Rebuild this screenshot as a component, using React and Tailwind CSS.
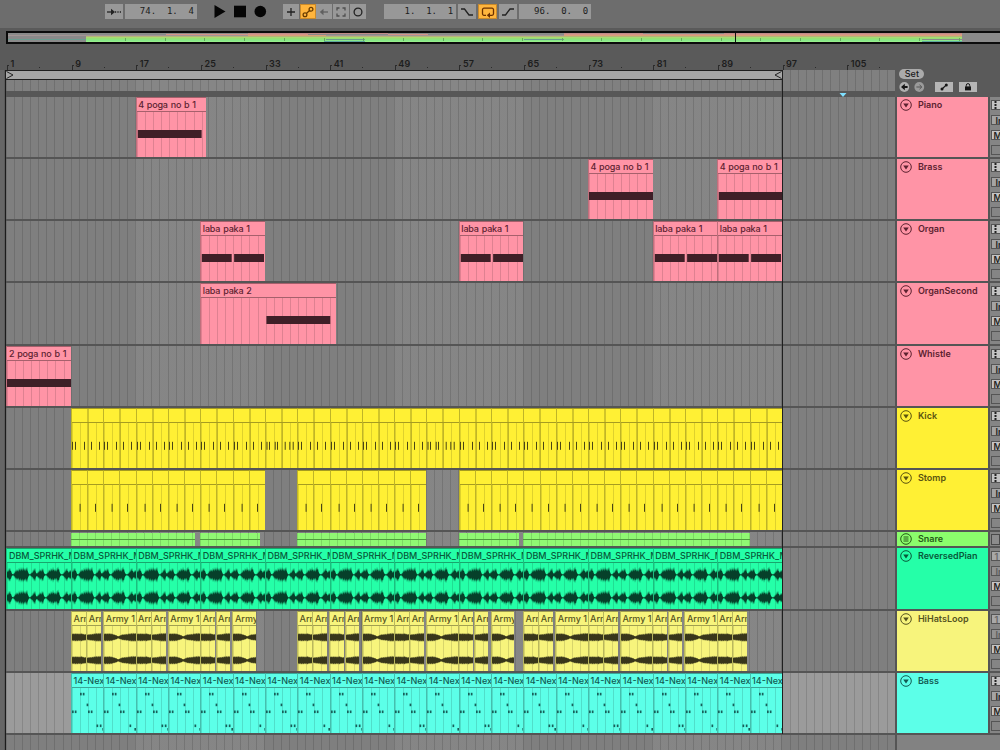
import React from "react";

const BAR = 775.5 / 96; // pixels per bar in the arrangement

const GRID =
  "bg-[repeating-linear-gradient(90deg,rgba(0,0,0,0.13)_0_1px,transparent_1px_8.078px)]";
const LANE_GRID =
  "bg-[repeating-linear-gradient(90deg,rgba(0,0,0,0.13)_0_1px,transparent_1px_8.078px),repeating-linear-gradient(90deg,transparent_0_129.25px,rgba(255,255,255,0.05)_129.25px_258.5px)]";

const split = (start, end, step, extra = {}) => {
  const out = [];
  for (let b = start; b < end; b += step) {
    out.push({ start: b, end: Math.min(b + step, end), ...extra });
  }
  return out;
};

// HiHat loops: short / short / long groups
const army = (start, shape) =>
  shape.map(([from, to]) => ({
    start: start + from,
    end: start + to,
    name: "Army 1",
    long: to - from > 2,
  }));
const SHORT = [[0, 1.85], [1.9, 3.72]];
const FULL = [...SHORT, [4, 8]];
const CUT = [...SHORT, [4, 6.92]];

const HIHATS = [
  ...army(9, FULL),
  ...army(17, FULL),
  ...army(25, CUT),
  ...army(37, SHORT),
  ...army(41, FULL),
  ...army(49, FULL),
  ...army(57, CUT),
  ...army(65, FULL),
  ...army(73, FULL),
  ...army(81, FULL),
  ...army(89, SHORT),
];

const PINK = "bg-[#ff94a6]";
const YELLOW = "bg-[#fff034]";

const TRACKS = [
  {
    name: "Piano",
    color: PINK,
    text: "text-[#5c2230]",
    height: "h-[62px]",
    clips: [{ start: 17, end: 25.65, name: "4 poga no b 1", notes: [[0.1, 8]] }],
  },
  {
    name: "Brass",
    color: PINK,
    text: "text-[#5c2230]",
    height: "h-[62px]",
    clips: [
      { start: 73, end: 81, name: "4 poga no b 1", notes: [[0, 8]] },
      { start: 89, end: 97, name: "4 poga no b 1", notes: [[0.1, 8]] },
    ],
  },
  {
    name: "Organ",
    color: PINK,
    text: "text-[#5c2230]",
    height: "h-[62px]",
    clips: [25, 57, 81, 89].map((b) => ({
      start: b,
      end: b + 8,
      name: "laba paka 1",
      notes: [[0.1, 3.8], [4.1, 7.8]],
    })),
  },
  {
    name: "OrganSecond",
    color: PINK,
    text: "text-[#5c2230]",
    height: "h-[63px]",
    clips: [{ start: 25, end: 41.75, name: "laba paka 2", notes: [[8.1, 16]] }],
  },
  {
    name: "Whistle",
    color: PINK,
    text: "text-[#5c2230]",
    height: "h-[62px]",
    clips: [{ start: 1, end: 9, name: "2 poga no b 1", notes: [[0, 8]] }],
  },
  {
    name: "Kick",
    color: YELLOW,
    text: "text-[#5a5310]",
    height: "h-[62px]",
    kind: "kick",
    clips: split(9, 97, 4),
  },
  {
    name: "Stomp",
    color: YELLOW,
    text: "text-[#5a5310]",
    height: "h-[62px]",
    kind: "stomp",
    clips: [...split(9, 33, 2), ...split(37, 53, 2), ...split(57, 97, 2)],
  },
  {
    name: "Snare",
    color: "bg-[#8bfd6c]",
    text: "text-[#265b18]",
    height: "h-[16px]",
    folded: true,
    clips: [
      { start: 9, end: 24.4 },
      { start: 25, end: 32.4 },
      { start: 37, end: 53 },
      { start: 57, end: 64.5 },
      { start: 65, end: 93 },
    ],
  },
  {
    name: "ReversedPian",
    color: "bg-[#25ffa8]",
    text: "text-[#08593a]",
    height: "h-[63px]",
    kind: "piano",
    audio: true,
    clips: split(1, 97, 8, { name: "DBM_SPRHK_Melody" }),
  },
  {
    name: "HiHatsLoop",
    color: "bg-[#f7f47c]",
    text: "text-[#55531f]",
    height: "h-[62px]",
    kind: "hihat",
    audio: true,
    clips: HIHATS,
  },
  {
    name: "Bass",
    color: "bg-[#5cffe8]",
    text: "text-[#125a52]",
    height: "h-[62px]",
    kind: "bass",
    selected: true,
    clips: split(9, 97, 4, { name: "14-Next" }),
  },
];

// Half heights, one per pixel, of an 8 bar piano clip
const PIANO_WAVE = [
  4, 5, 7, 7, 4, 1, 0.7, 2, 4, 5, 6, 5, 7.5, 6, 8, 6.5, 8, 7, 6, 7.5, 8, 3, 0.8, 0.7,
  2, 3, 5, 6.5, 7, 2, 2, 3.5, 4.5, 6, 5, 7, 6.5, 2, 0.8, 0.7, 2, 3.5, 5.5, 5, 7, 6,
  8, 5.5, 6, 5, 7.5, 8.5, 6, 2, 0.8, 0.7, 1.5, 3, 4.5, 6.5, 7, 3.5, 4, 5, 5,
];
const HAT_A = [3.8, 4.3, 3.8, 4.4, 4, 4.4, 3.8, 4.2, 3.8, 4.5, 4, 3.8, 3.4, 3.6, 3.2];
const HAT_B = [2.8, 3.2, 3.2, 3.6, 3.4, 3.8, 3.6, 4.3, 4, 4.6, 4.2, 4.6, 4.3, 4.7, 4.2];
const HAT_LONG = [
  3.8, 4.4, 4, 4.4, 4, 4.5, 4, 4.2, 3.8, 3.2, 3.2, 2.6, 2.6, 1.6, 1.3, 1.6, 2.2, 2.5,
  3.2, 3, 3.5, 3.2, 3.7, 3.5, 3.8, 4.2, 4, 4.6, 4.2, 4.7, 4.3, 4.6, 4.2,
];

// depth: how far the outline falls back between two peaks
function Wave({ samples, y, fill, depth = 0.7 }) {
  const line = (side) =>
    samples.flatMap((a, i) => [
      `${i},${(y + side * a).toFixed(1)}`,
      `${i + 0.5},${(y + side * a * depth).toFixed(1)}`,
    ]);
  return <polygon points={[...line(-1), ...line(1).reverse()].join(" ")} fill={fill} />;
}

function ClipContent({ clip, kind, index }) {
  if (kind === "kick") {
    const dense = clip.start === 33 || clip.start === 53;
    const hits = dense
      ? [0.5, 3, 8.7, 11, 18.7, 23.3, 26.7]
      : [0, 3, 12, 19, 27];
    return (
      <>
        {hits.map((x) => (
          <rect key={x} x={x} y="18.8" width="1" height="8" fill="#4a4515" />
        ))}
        <rect x="15.5" y="-14" width="1" height="62" fill="#a49a20" />
      </>
    );
  }
  if (kind === "stomp") {
    return <rect x={index % 2 ? 7 : 7.6} y="18.8" width="1" height="8" fill="#4a4515" />;
  }
  if (kind === "piano") {
    return (
      <>
        <Wave samples={PIANO_WAVE} y={11.8} fill="#06402a" depth={0.55} />
        <Wave samples={PIANO_WAVE} y={34.8} fill="#06402a" depth={0.55} />
      </>
    );
  }
  if (kind === "hihat") {
    const samples = clip.long ? HAT_LONG : clip.start % 1 === 0 ? HAT_A : HAT_B;
    return (
      <>
        <Wave samples={samples} y={11.3} fill="#38361a" />
        <Wave samples={samples} y={34.3} fill="#38361a" />
      </>
    );
  }
  if (kind === "bass") {
    const notes = [
      [0, 22.5], [2.8, 22.5], [8, 4.8], [10.8, 4.8], [14.6, 15.6], [16, 22.5],
      [18.8, 22.5],
      ...(index % 2 ? [[25.5, 36.5]] : [[24.5, 36.5], [27.8, 36.5]]),
      [30.4, 40],
    ];
    return notes.map(([x, y]) => (
      <rect key={`${x}-${y}`} x={x} y={y} width="1.7" height="2.6" fill="#17605a" />
    ));
  }
  return (clip.notes || []).map(([from, to]) => (
    <rect
      key={from}
      x={from * BAR}
      y="18"
      width={(to - from) * BAR}
      height="8"
      fill="#3f1f27"
    />
  ));
}

function Clip({ clip, previousEnd, track, index }) {
  const style = {
    width: (clip.end - clip.start) * BAR,
    marginLeft: (clip.start - previousEnd) * BAR,
  };
  if (track.folded) {
    return (
      <div className="shrink-0 pt-px" style={style}>
        <div className={`h-full bg-[#90f873] ${GRID}`}>
          <div className="h-[7px] border-b border-[#4f9c3c]" />
        </div>
      </div>
    );
  }
  return (
    <div
      className={`shrink-0 overflow-hidden border-t border-l border-t-black/35 border-l-black/25 ${track.color}`}
      style={style}
    >
      <div
        className={`h-[14px] overflow-hidden border-b border-black/35 pl-[1.5px] text-[9px] leading-[14px] font-medium whitespace-nowrap ${
          track.color === PINK ? "tracking-[-0.15px] [word-spacing:0.6px]" : ""
        } ${track.text}`}
      >
        {clip.name}
      </div>
      <div className={`h-[47px] ${GRID}`}>
        <svg className="block h-full w-full overflow-visible">
          <ClipContent clip={clip} kind={track.kind} index={index} />
        </svg>
      </div>
    </div>
  );
}

function FoldIcon({ folded }) {
  return (
    <svg className="size-3 shrink-0" viewBox="0 0 12 12">
      <circle cx="6" cy="6" r="5.3" fill="none" stroke="currentColor" />
      {folded ? (
        <path d="M3.5 4h5M3.5 6h5M3.5 8h5" stroke="currentColor" />
      ) : (
        <path d="M3.2 4.4h5.6L6 8.4z" fill="currentColor" />
      )}
    </svg>
  );
}

function MixerStrip({ track }) {
  if (track.folded) {
    return <div className="mt-[1.5px] h-[11px] border border-[#4a4a4a] bg-[#8c8c8c]" />;
  }
  const dim = track.audio;
  return (
    <div className="flex flex-col gap-[5px] pt-[3px] text-[9px] leading-[9px] font-semibold text-[#222]">
      <div
        className={`h-2.5 overflow-hidden border border-[#555] pl-0.5 ${
          dim ? "bg-[#a8a8a8] text-[#666]" : "bg-[#c4c4c4]"
        }`}
      >
        {dim ? (
          "1"
        ) : (
          <svg className="block h-2 w-1" viewBox="0 0 4 8">
            <path d="M1.5 0v8" stroke="#222" strokeWidth="2" strokeDasharray="2 1" />
          </svg>
        )}
      </div>
      <div
        className={`h-2.5 overflow-hidden border border-[#555] pl-[3px] ${
          dim ? "bg-[#929292] text-[#5c5c5c]" : "bg-[#a4a4a4]"
        }`}
      >
        In
      </div>
      <div className="h-2.5 overflow-hidden border border-[#555] bg-[#c4c4c4] pl-px">M</div>
      <div className="h-2.5 border border-[#555] bg-[#858585]" />
    </div>
  );
}

function TrackRow({ track }) {
  return (
    <div className={`flex ${track.height}`}>
      <div
        className={`flex w-[889px] shrink-0 border-b-2 border-[#555] ${LANE_GRID} ${
          track.selected ? "bg-[#9b9b9b]" : "bg-[#7f7f7f]"
        }`}
      >
        {track.clips.map((clip, i) => (
          <Clip
            key={clip.start}
            clip={clip}
            previousEnd={i ? track.clips[i - 1].end : 1}
            track={track}
            index={i}
          />
        ))}
      </div>
      <div className="flex w-[95px] shrink-0 border-x-2 border-b-2 border-[#555]">
        <div
          className={`flex flex-1 items-start gap-1.5 pl-[2.5px] text-[9px] leading-3 font-semibold ${
            track.folded ? "pt-px" : "pt-[1.5px]"
          } ${track.color} ${track.text}`}
        >
          <FoldIcon folded={track.folded} />
          {track.name}
        </div>
      </div>
      <div className="flex-1 border-b-2 border-[#555] bg-[#858585] pl-px">
        <MixerStrip track={track} />
      </div>
    </div>
  );
}

function ToolButton({ children, className = "w-4", active }) {
  return (
    <div
      className={`flex h-[15px] items-center justify-center ${className} ${
        active ? "border border-[#c98a2c] bg-[#ffb53d]" : "bg-[#989898]"
      }`}
    >
      <svg
        className="h-3.5 w-4 shrink-0"
        viewBox="0 0 16 14"
        fill="none"
        stroke="#222"
        strokeWidth="1.3"
      >
        {children}
      </svg>
    </div>
  );
}

function Position({ value }) {
  return (
    <div className="h-[15px] w-[72px] bg-[#989898] pr-[3px] text-right font-['DejaVu_Sans_Mono','Liberation_Mono',monospace] text-[9px] leading-[15px] whitespace-pre text-[#1c1c1c]">
      {value}
    </div>
  );
}

function Toolbar() {
  return (
    <div className="flex h-7 items-start bg-[#6d6d6d] pt-1 pl-[105px]">
      <ToolButton className="w-[18px]">
        <path d="M1 7h5" />
        <path d="M5 3.8 9 7 5 10.2z" fill="#222" stroke="none" />
        <path d="M9 7h6" strokeDasharray="1.2 1.2" />
      </ToolButton>
      <div className="ml-0.5">
        <Position value={" 74.  1.  4"} />
      </div>
      <svg className="ml-4 h-[15px] w-[54px]" viewBox="0 0 54 15">
        <path d="M1.5 1 12.5 7.5 1.5 14z" fill="#050505" />
        <path d="M21 1.7h12v11.6H21z" fill="#050505" />
        <circle cx="47.3" cy="7.5" r="5.8" fill="#050505" />
      </svg>
      <div className="ml-4 flex gap-[0.7px]">
        <ToolButton>
          <path d="M4 7h8M8 3v8" />
        </ToolButton>
        <ToolButton active>
          <circle cx="5" cy="9.7" r="1.9" stroke="#6b3d00" />
          <circle cx="11" cy="4.2" r="1.9" stroke="#6b3d00" />
          <path d="m6.4 8.4 3.2-2.9" stroke="#6b3d00" />
        </ToolButton>
        <ToolButton>
          <path d="M6 7h6" stroke="#5f5f5f" />
          <path d="M7.5 3.8 3.8 7l3.7 3.2z" fill="#5f5f5f" stroke="none" />
        </ToolButton>
        <ToolButton>
          <path
            d="M4 5.5V3h2.5M9.5 3H12v2.5M12 8.5V11H9.5M6.5 11H4V8.5"
            stroke="#4f4f4f"
          />
        </ToolButton>
        <ToolButton>
          <circle cx="8" cy="7" r="3.9" />
        </ToolButton>
      </div>
      <div className="ml-[18.5px] flex gap-0.5">
        <Position value="1.  1.  1" />
        <ToolButton className="w-[18px]">
          <path d="M2 4h3.5l4.5 6h4" />
        </ToolButton>
        <ToolButton className="w-[19px]" active>
          <path
            d="M6 10.3H4a1.5 1.5 0 0 1-1.5-1.5V4.7A1.5 1.5 0 0 1 4 3.2h8a1.5 1.5 0 0 1 1.5 1.5v4.1a1.5 1.5 0 0 1-1.5 1.5H9.5"
            stroke="#6b3000"
          />
          <path d="M10 7.6v5.4L6.8 10.3z" fill="#6b3000" stroke="none" />
        </ToolButton>
        <ToolButton className="w-[18px]">
          <path d="M2 10h3.5L10 4h4" />
        </ToolButton>
        <Position value="96.  0.  0" />
      </div>
    </div>
  );
}

const OVERVIEW = [
  { y: 0, color: "#c08a88", spans: [[240, 380], [556, 635], [716, 954]] },
  { y: 1, color: "#d69388", spans: [[158, 300], [380, 420], [556, 954]] },
  { y: 2, color: "#a39595", spans: [[0, 954]] },
  { y: 2, color: "#d9a078", spans: [[240, 318], [556, 954]] },
  { y: 3, color: "#b4b478", spans: [[78, 954]] },
  { y: 4, color: "#a8dc70", spans: [[78, 954]] },
  { y: 5, color: "#96de74", spans: [[78, 954]] },
  { y: 6, color: "#8ce57c", spans: [[78, 318], [357, 516], [556, 914]] },
  { y: 6, color: "#6a9c90", spans: [[0, 78], [318, 357], [516, 556]] },
  { y: 7, color: "#88e88a", spans: [[78, 954]] },
  { y: 8, color: "#98f08c", spans: [[78, 316], [357, 914]] },
  { y: 8, color: "#5fa8a0", spans: [[316, 357], [914, 954]] },
];

function Overview() {
  return (
    <div className="mt-[3px] ml-1.5 h-[13px] border-2 border-r-0 border-[#0b0b0b] bg-[#8a8a8a]">
      <svg className="block h-full w-full" shapeRendering="crispEdges">
        {OVERVIEW.map(({ y, color, spans }) =>
          spans.map(([from, to]) => (
            <rect
              key={`${y}-${from}-${color}`}
              x={from}
              y={y}
              width={to - from}
              height="1"
              fill={color}
            />
          ))
        )}
        {Array.from({ length: 22 }, (_, i) => (
          <rect key={i} x={117 + i * 39.7} y="5" width="1" height="3" fill="#67a85c" />
        ))}
        <rect x="727" y="0" width="1" height="12" fill="#111" />
      </svg>
    </div>
  );
}

function Ruler() {
  return (
    <div className="flex h-[26px] items-end pl-[7px]">
      {Array.from({ length: 14 }, (_, i) => (
        <div
          key={i}
          className="flex h-3 w-[64.625px] shrink-0 text-[9px] leading-[11px] font-semibold text-[#1d1d1d]"
        >
          <span className="mt-[7px] h-[5px] w-[2px] border-t border-l border-[#2c2c2c]" />
          <span className="ml-[1.5px] w-[28.5px] tracking-[0.2px]">{i * 8 + 1}</span>
          <span className="mt-[9px] h-px w-px bg-[#2c2c2c]" />
        </div>
      ))}
    </div>
  );
}

function TimelineHeader() {
  return (
    <div className="flex h-[27px]">
      <div className="w-[889px] shrink-0 border-b-[6px] border-[#575757]">
        <div className="flex h-[21px]">
          <div className="flex w-[776px] shrink-0 flex-col">
            <div className="flex h-2.5 items-center justify-between border-y border-[#1f1f1f] bg-[#a6a6a6]">
              <svg className="h-2 w-2" viewBox="0 0 8 8" fill="none" stroke="#222">
                <path d="M.5.5 7 4 .5 7.5" />
              </svg>
              <svg className="h-2 w-2" viewBox="0 0 8 8" fill="none" stroke="#222">
                <path d="M7.5.5 1 4l6.5 3.5" />
              </svg>
            </div>
            <div className={`flex-1 bg-[#808080] ${LANE_GRID}`} />
          </div>
          <div className={`flex-1 bg-[#808080] ${GRID}`} />
        </div>
      </div>
      <div className="flex flex-1 flex-col gap-[3px] pl-1">
        <div className="-mt-px h-2.5 w-[25px] rounded-full bg-[#ababab] text-center text-[9px] leading-[10px] font-medium text-[#1c1c1c]">
          Set
        </div>
        <div className="flex items-center">
          <svg className="h-2.5 w-[26px]" viewBox="0 0 26 10">
            <circle cx="5.3" cy="5" r="4.9" fill="#b0b0b0" />
            <path d="M5.8 1.8v2.2h2.8v2H5.8v2.2L2 5z" fill="#151515" />
            <circle cx="20.3" cy="5" r="4.9" fill="#9a9a9a" />
            <path d="M17.4 5h5M20.5 2.8 22.8 5l-2.3 2.2" fill="none" stroke="#555" />
          </svg>
          <svg className="ml-2.5 h-2.5 w-[18px] bg-[#b5b5b5]" viewBox="0 0 18 10">
            <path d="m7.3 6.8 3.6-3.4" stroke="#151515" strokeWidth="1.2" />
            <circle cx="7" cy="7" r="1.5" fill="#151515" />
            <circle cx="11.3" cy="3.1" r="1.5" fill="#151515" />
          </svg>
          <svg className="ml-1.5 h-2.5 w-[18px] bg-[#b5b5b5]" viewBox="0 0 18 10">
            <path d="M6 4.4h6v4H6z" fill="#151515" />
            <path d="M7.3 4.6V3.3a1.7 1.7 0 0 1 3.4 0v1.3" fill="none" stroke="#151515" />
          </svg>
        </div>
      </div>
    </div>
  );
}

export default function App() {
  return (
    <div className="flex h-[750px] w-[1000px] flex-col overflow-hidden bg-[#5a5a5a] font-['Inter','Liberation_Sans',sans-serif]">
      <Toolbar />
      <Overview />
      <Ruler />
      <div className="relative flex min-h-0 flex-1 flex-col border-l-4 border-[#666] pl-[1.4px]">
        <div className="flex min-h-0 flex-1 flex-col border-l border-[#1c1c1c]">
          <TimelineHeader />
          {TRACKS.map((track) => (
            <TrackRow key={track.name} track={track} />
          ))}
          <div className="flex flex-1">
            <div className={`w-[889px] bg-[#7f7f7f] ${LANE_GRID}`} />
            <div className="flex-1 border-l-2 border-[#555] bg-[#828282]" />
          </div>
        </div>

        {/* end of arrangement */}
        <div className="absolute top-0 left-[778px] h-[664px] w-px bg-[#1f1f1f]" />
        {/* insert marker */}
        <svg className="absolute top-[23px] left-[835px] h-1 w-2" viewBox="0 0 8 4">
          <path d="M.5 0h7L4 4z" fill="#7fe0ff" />
        </svg>
      </div>
    </div>
  );
}
